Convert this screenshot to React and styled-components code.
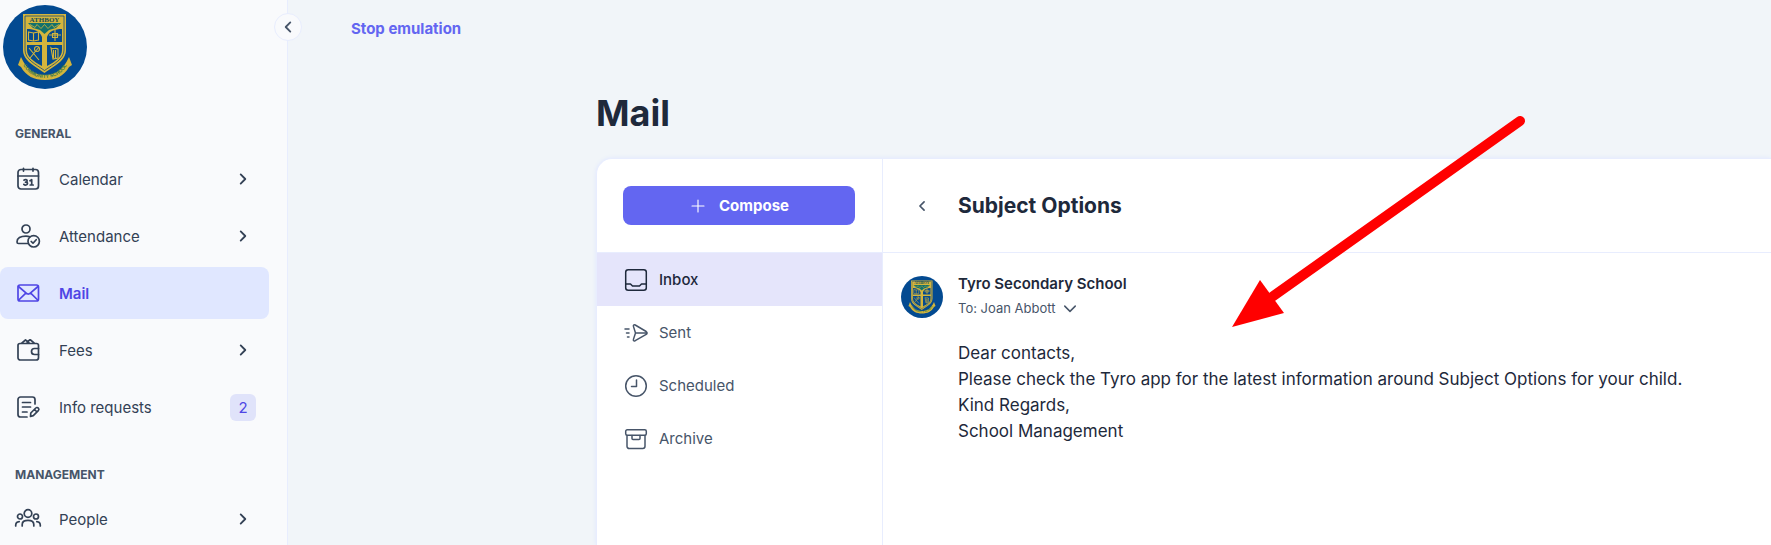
import React from "react";
import styled, { createGlobalStyle } from "styled-components";

const style = {
  font: `Inter, "Liberation Sans", sans-serif`,
  primary: "#6366f1",
  primaryDark: "#4f46e5",
  primary100: "#e0e7ff",
  selected: "#e5e5fb",
  background: "#f1f5f9",
  sidebar: "#f9fafc",
  line: "#e8edfe",
  slate600: "#475569",
  slate700: "#334155",
  slate800: "#1e293b",
};

const GlobalStyle = createGlobalStyle`
  *, *::before, *::after {
    box-sizing: border-box;
  }

  body {
    margin: 0;
    background: ${style.background};
    color: ${style.slate800};
    font-family: ${style.font};
    font-size: 15px;
  }

  button {
    font-family: inherit;
    cursor: pointer;
  }
`;

const Page = styled.div`
  display: flex;
  height: 100vh;
  overflow: hidden;
`;

const Sidebar = styled.aside`
  position: relative;
  flex: 0 0 288px;
  padding: 5px 18px 0 0;
  background: ${style.sidebar};
  border-right: 1px solid ${style.line};
`;

const CollapseButton = styled.button`
  position: absolute;
  top: 13px;
  right: -15px;
  display: flex;
  align-items: center;
  justify-content: center;
  width: 28px;
  height: 28px;
  padding: 0;
  color: ${style.slate600};
  background: ${style.sidebar};
  border: 1px solid ${style.line};
  border-radius: 50%;
`;

const Brand = styled.a`
  display: block;
  width: 84px;
  height: 84px;
  margin-left: 3px;
`;

const NavHeading = styled.h2`
  margin: 0;
  padding: ${({ $first }) => ($first ? "35px 15px 9px" : "32px 15px 8px")};
  color: ${style.slate600};
  font-size: 12px;
  line-height: 20px;
  font-weight: 700;
`;

const NavList = styled.ul`
  display: flex;
  flex-direction: column;
  gap: 5px;
  margin: 0;
  padding: 0;
  list-style: none;
`;

const NavLink = styled.a`
  display: flex;
  align-items: center;
  height: 52px;
  padding: 0 13px 0 16px;
  color: ${({ $active }) => ($active ? style.primaryDark : style.slate700)};
  background: ${({ $active }) => ($active ? style.primary100 : "transparent")};
  border-radius: 8px;
  font-size: 15px;
  font-weight: ${({ $active }) => ($active ? 600 : 400)};
  text-decoration: none;

  & > span {
    flex: 1;
    margin-left: 19px;
  }
`;

const NavArrow = styled.div`
  display: flex;
  justify-content: center;
  width: 26px;
`;

const NavBadge = styled.div`
  width: 26px;
  color: ${style.primaryDark};
  background: #e0e3fa;
  border-radius: 6px;
  line-height: 27px;
  text-align: center;
`;

const Main = styled.main`
  flex: 1;
  display: flex;
  flex-direction: column;
  min-width: 0;
`;

const TopBar = styled.header`
  display: flex;
  align-items: center;
  height: 56px;
  padding: 0 63px;
`;

const StopButton = styled.button`
  padding: 0;
  color: ${style.primary};
  background: none;
  border: 0;
  font-size: 15px;
  font-weight: 700;
`;

const Content = styled.div`
  flex: 1;
  display: flex;
  flex-direction: column;
  padding: 33px 0 0 308px;
`;

const Title = styled.h1`
  margin: 0 0 21px;
  font-size: 36px;
  line-height: 48px;
  font-weight: 700;
`;

const Card = styled.div`
  position: relative;
  flex: 1;
  display: flex;
  background: #fff;
  border: solid ${style.line};
  border-width: 1px 0 0 1px;
  border-radius: 16px 0 0 0;
  box-shadow: 0 0 4px ${style.primary100};
`;

const Folders = styled.nav`
  flex: 0 0 286px;
  border-right: 1px solid ${style.line};
`;

const ComposeArea = styled.div`
  height: 94px;
  padding: 27px 27px 0 26px;
  border-bottom: 1px solid ${style.line};
`;

const ComposeButton = styled.button`
  display: flex;
  align-items: center;
  justify-content: center;
  gap: 12px;
  width: 100%;
  height: 39px;
  color: #fff;
  background: ${style.primary};
  border: 0;
  border-radius: 8px;
  font-size: 15px;
  font-weight: 700;
`;

const FolderLink = styled.a`
  display: flex;
  align-items: center;
  gap: 11px;
  height: 53px;
  padding-left: 27px;
  color: ${({ $active }) => ($active ? style.slate800 : style.slate600)};
  background: ${({ $active }) => ($active ? style.selected : "transparent")};
  font-size: 15px;
  font-weight: ${({ $active }) => ($active ? 500 : 400)};
  text-decoration: none;
`;

const Message = styled.section`
  flex: 1;
  min-width: 0;
`;

const MessageHeader = styled.header`
  display: flex;
  align-items: center;
  height: 94px;
  padding-left: 29px;
  border-bottom: 1px solid ${style.line};
`;

const BackButton = styled.button`
  display: flex;
  padding: 0;
  margin-right: 26px;
  color: ${style.slate600};
  background: none;
  border: 0;
`;

const Subject = styled.h2`
  margin: 0;
  font-size: 21px;
  line-height: 28px;
  font-weight: 700;
`;

const MessageBody = styled.article`
  display: flex;
  align-items: flex-start;
  gap: 15px;
  padding: 19px 24px 0 18px;
`;

const Avatar = styled.div`
  flex: 0 0 42px;
  height: 42px;
  margin-top: 4px;
`;

const Sender = styled.h3`
  margin: 0;
  font-size: 15px;
  line-height: 24px;
  font-weight: 600;
`;

const Recipient = styled.button`
  display: flex;
  align-items: center;
  gap: 6px;
  padding: 0;
  color: ${style.slate600};
  background: none;
  border: 0;
  font-size: 13px;
  line-height: 24px;
`;

const Text = styled.p`
  margin: 20px 0 0;
  font-size: 17px;
  line-height: 26px;
`;

const Pointer = styled.svg`
  position: absolute;
  top: -46px;
  left: 635px;
  width: 294px;
  height: 216px;
  pointer-events: none;
`;

const IconSvg = styled.svg`
  flex: none;
  overflow: visible;
`;

const Icon = ({ size = 24, width = 1.5, children }) => (
  <IconSvg
    width={size}
    height={size}
    viewBox="0 0 24 24"
    fill="none"
    stroke="currentColor"
    strokeWidth={width}
    strokeLinecap="round"
    strokeLinejoin="round"
    aria-hidden="true"
  >
    {children}
  </IconSvg>
);

const chevrons = {
  left: "M14.5 7 9.5 12l5 5",
  right: "m9.5 7 5 5-5 5",
  down: "m5 9.5 7 7 7-7",
};

const Chevron = ({ direction, size = 24, width = 2 }) => (
  <Icon size={size} width={width}>
    <path d={chevrons[direction]} />
  </Icon>
);

const CalendarIcon = () => (
  <Icon width={1.7}>
    <rect x="2" y="2.5" width="20.500" height="19.500" rx="3" />
    <path d="M2 9h20.500M7.500 1.300v2.800M17 1.300v2.800" />
    <path d="M8 13.200c1-.9 3.300-.7 3.200.8 0 1-.9 1.200-1.700 1.200 1 0 2 .3 2 1.400 0 1.700-2.600 1.800-3.700.8M14 13.800l1.700-1.100v5.200M14.200 18h3" />
  </Icon>
);

const AttendanceIcon = () => (
  <Icon width={1.7}>
    <circle cx="10" cy="5" r="4" />
    <path d="M11.500 19.500H2.500A1.500 1.500 0 0 1 1 18c0-4 3.500-5.800 9-5.800 1.500 0 2.800.2 4 .5" />
    <circle cx="17.700" cy="17.300" r="5.700" />
    <path d="m15.200 17.500 1.800 1.700 3.200-3.500" />
  </Icon>
);

const MailIcon = () => (
  <Icon width={1.7}>
    <rect x="2" y="4" width="20.500" height="16" rx="2" />
    <path d="m2.500 5.500 7.700 6.700c1.200 1 2.900 1 4.100 0L22 5.500M2.800 19l7-6.800M21.700 19l-7-6.800" />
  </Icon>
);

const FeesIcon = () => (
  <Icon width={1.7}>
    <path d="M22.500 10.500V7.500a2 2 0 0 0-2-2H4a2 2 0 0 0-2 2v12.200A2.300 2.300 0 0 0 4.300 22h15.900a2.300 2.300 0 0 0 2.300-2.300v-3.200" />
    <path d="M22.500 10.500h-4a3 3 0 0 0 0 6h4zM6 5l3.500-3.200L13 5M11.500 3.300 14.500 1.800 18 5M11 5l2.500-3" />
  </Icon>
);

const InfoIcon = () => (
  <Icon width={1.7}>
    <path d="M11 22H4.500A2.500 2.500 0 0 1 2 19.500v-15A2.500 2.500 0 0 1 4.500 2h12A2.500 2.500 0 0 1 19 4.500V9M6.500 7.500h8M6.500 12h8M6.500 17h4.500" />
    <path d="m14.800 18 5-5a1.600 1.600 0 0 1 2.500.2c.8.8.7 1.700 0 2.400l-5 5-2.800.9z M18.500 14.500l2.500 2.500" />
  </Icon>
);

const PeopleIcon = () => (
  <Icon width={1.7}>
    <circle cx="12" cy="6.500" r="3.800" />
    <circle cx="4" cy="9.500" r="2.500" />
    <circle cx="20" cy="9.500" r="2.500" />
    <path d="M6.200 19v-1.500c0-3 2-4.200 5.800-4.200s5.800 1.200 5.800 4.200V19M-.3 19v-.8c0-2.200 1.200-3.400 3.500-3.600M24.300 19v-.8c0-2.200-1.200-3.400-3.500-3.600" />
  </Icon>
);

const InboxIcon = () => (
  <Icon>
    <rect x="1.700" y="1.700" width="20.600" height="20.600" rx="2.500" />
    <path d="M2 16h4.500l2 2h7l2-2h4.500" />
  </Icon>
);

const SentIcon = () => (
  <Icon>
    <path d="M9.500 5.600c-.5-1.600.4-2.200 1.700-1.600l11 6.500c1.200.8 1.200 2.200 0 2.900l-11 6.300c-1.300.6-2.200 0-1.700-1.600L11.500 12zM11.500 12h11M1 8h4M2.500 12H5M3.500 16H5" />
  </Icon>
);

const ScheduledIcon = () => (
  <Icon>
    <circle cx="12" cy="12" r="10.300" />
    <path d="M12.500 6v6.500h-5" />
  </Icon>
);

const ArchiveIcon = () => (
  <Icon>
    <rect x="1.700" y="2.800" width="20.600" height="5.500" rx="1.500" />
    <path d="M3 8.500v10.800a2.200 2.200 0 0 0 2.200 2.200h13.600a2.200 2.200 0 0 0 2.200-2.200V8.500M8 8.500v3a1 1 0 0 0 1 1h6a1 1 0 0 0 1-1v-3" />
  </Icon>
);

const Crest = ({ id }) => (
  <svg width="100%" height="100%" viewBox="0 0 84 84" role="img" aria-label="School crest">
    <circle cx="42" cy="42" r="42" fill="#034a91" />
    <path d="M20 9h43v36c0 11-12 16-21.500 23C32 61 20 56 20 45z" fill="#d4b53c" />
    <path d="M22 11h39v34c0 9-10 14-19.500 20.500C32 59 22 54 22 45z" fill="none" stroke="#174d78" strokeWidth=".8" />
    <text x="41.500" y="16.500" textAnchor="middle" fill="#174d58" fontFamily="Liberation Serif, serif" fontSize="7" fontWeight="700">
      ATHBOY
    </text>
    <path d="M25 18h33l-5 5-7 2-4.500 4-4.500-4-7-2z" fill="#13716c" />
    <path d="M27 19.500l5 3 2-3 4 4 3.500-4 3.500 4 4-4 2 3 5-3" fill="none" stroke="#d4b53c" strokeWidth=".8" />
    <path d="M24 24c7 0 13 2 15 8v5H24zM59 24c-7 0-13 2-15 8v5h15zM24 40h15v21c-9-5-15-9-15-16zM59 40H44v21c9-5 15-9 15-16z" fill="#064b8d" />
    <g fill="none" stroke="#d4b53c" strokeWidth="1.100">
      <path d="M25.500 27l5 1 5-1v8l-5 1-5-1zM30.500 28v8" />
      <path d="M52 24v12M46 30h12M49.500 28.500h5v4h-5z" />
      <path d="M36 42 27 53M26 43l5 6 5 6" />
      <circle cx="34" cy="44" r="2.500" />
      <path d="M48 43c2 2 4-1 7 1v9l-5 1zM50.500 45v8M52.500 45v8" />
    </g>
    <path d="M18 52c6 14 15 18 24 18s18-4 24-18l3 8-3 2c-5 9-13 13-24 13S23 71 18 62l-3-2z" fill="#d4b53c" />
    <path id={id} d="M20 60c5 9 13 13 22 13s17-4 22-13" fill="none" />
    <text fill="#3e7b4a" fontFamily="Liberation Sans, sans-serif" fontSize="5" fontWeight="700" textAnchor="middle">
      <textPath href={`#${id}`} startOffset="50%">
        COMMUNITY SCHOOL
      </textPath>
    </text>
  </svg>
);

const GENERAL = [
  { label: "Calendar", icon: CalendarIcon },
  { label: "Attendance", icon: AttendanceIcon },
  { label: "Mail", icon: MailIcon, active: true },
  { label: "Fees", icon: FeesIcon },
  { label: "Info requests", icon: InfoIcon, badge: 2 },
];

const MANAGEMENT = [{ label: "People", icon: PeopleIcon }];

const FOLDERS = [
  { label: "Inbox", icon: InboxIcon, active: true },
  { label: "Sent", icon: SentIcon },
  { label: "Scheduled", icon: ScheduledIcon },
  { label: "Archive", icon: ArchiveIcon },
];

const NavItems = ({ items }) => (
  <NavList>
    {items.map(({ label, icon: ItemIcon, active, badge }) => (
      <li key={label}>
        <NavLink href="#" $active={active}>
          <ItemIcon />
          <span>{label}</span>
          {badge ? <NavBadge>{badge}</NavBadge> : null}
          {!badge && !active ? (
            <NavArrow>
              <Chevron direction="right" size={22} />
            </NavArrow>
          ) : null}
        </NavLink>
      </li>
    ))}
  </NavList>
);

const App = () => (
  <>
    <GlobalStyle />
    <Page>
      <Sidebar>
        <Brand href="#">
          <Crest id="brand-ribbon" />
        </Brand>
        <CollapseButton aria-label="Collapse menu">
          <Chevron direction="left" size={22} />
        </CollapseButton>
        <nav>
          <NavHeading $first>GENERAL</NavHeading>
          <NavItems items={GENERAL} />
          <NavHeading>MANAGEMENT</NavHeading>
          <NavItems items={MANAGEMENT} />
        </nav>
      </Sidebar>
      <Main>
        <TopBar>
          <StopButton>Stop emulation</StopButton>
        </TopBar>
        <Content>
          <Title>Mail</Title>
          <Card>
            <Folders>
              <ComposeArea>
                <ComposeButton>
                  <Icon size={18}>
                    <path d="M12 4v16M4 12h16" />
                  </Icon>
                  Compose
                </ComposeButton>
              </ComposeArea>
              {FOLDERS.map(({ label, icon: FolderIcon, active }) => (
                <FolderLink key={label} href="#" $active={active}>
                  <FolderIcon />
                  {label}
                </FolderLink>
              ))}
            </Folders>
            <Message>
              <MessageHeader>
                <BackButton aria-label="Back">
                  <Chevron direction="left" size={20} />
                </BackButton>
                <Subject>Subject Options</Subject>
              </MessageHeader>
              <MessageBody>
                <Avatar>
                  <Crest id="avatar-ribbon" />
                </Avatar>
                <div>
                  <Sender>Tyro Secondary School</Sender>
                  <Recipient>
                    To: Joan Abbott
                    <Chevron direction="down" size={18} />
                  </Recipient>
                  <Text>
                    Dear contacts,
                    <br />
                    Please check the Tyro app for the latest information around
                    Subject Options for your child.
                    <br />
                    Kind Regards,
                    <br />
                    School Management
                  </Text>
                </div>
              </MessageBody>
            </Message>
            <Pointer viewBox="0 0 294 216" aria-hidden="true">
              <path d="M288 8 40 184" stroke="#f00" strokeWidth="10" strokeLinecap="round" />
              <path d="m28 167 24 33-52 14z" fill="#f00" />
            </Pointer>
          </Card>
        </Content>
      </Main>
    </Page>
  </>
);

export default App;
